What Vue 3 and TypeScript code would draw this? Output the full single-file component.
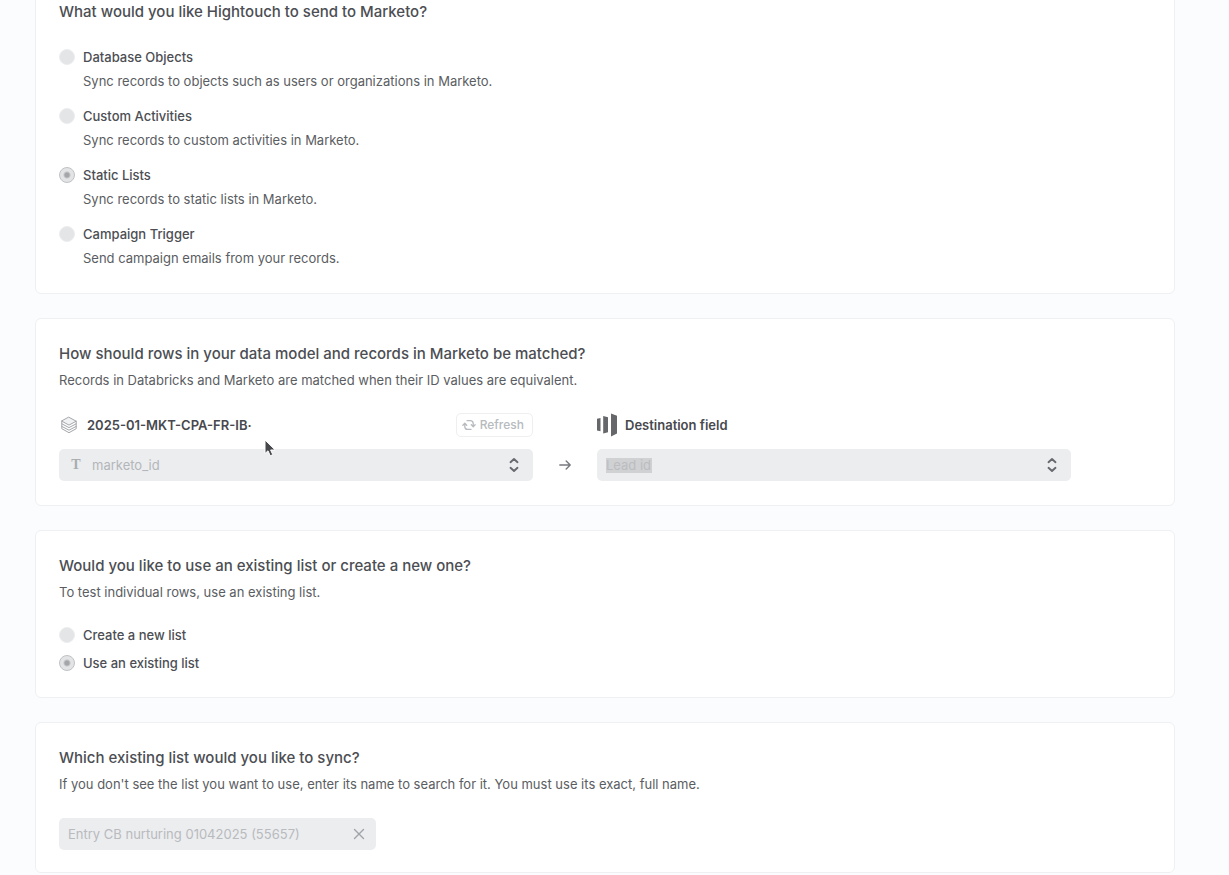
<script setup lang="ts">
import { ref } from 'vue'

interface SyncType {
  value: string
  label: string
  description: string
}

const syncTypes: SyncType[] = [
  { value: 'objects', label: 'Database Objects', description: 'Sync records to objects such as users or organizations in Marketo.' },
  { value: 'activities', label: 'Custom Activities', description: 'Sync records to custom activities in Marketo.' },
  { value: 'static', label: 'Static Lists', description: 'Sync records to static lists in Marketo.' },
  { value: 'campaign', label: 'Campaign Trigger', description: 'Send campaign emails from your records.' },
]

const listModes = [
  { value: 'new', label: 'Create a new list' },
  { value: 'existing', label: 'Use an existing list' },
]

const syncType = ref('static')
const listMode = ref('existing')
const listName = ref('Entry CB nurturing 01042025 (55657)')
</script>

<template>
  <main class="page">
    <section class="card">
      <h2 id="send-title">What would you like Hightouch to send to Marketo?</h2>
      <div class="types" role="radiogroup" aria-labelledby="send-title">
        <div v-for="t in syncTypes" :key="t.value" class="type">
          <label class="option">
            <input v-model="syncType" type="radio" name="sync-type" :value="t.value" disabled />
            <span>{{ t.label }}</span>
          </label>
          <p class="type-text">{{ t.description }}</p>
        </div>
      </div>
    </section>

    <section class="card">
      <h2>How should rows in your data model and records in Marketo be matched?</h2>
      <p class="hint">Records in Databricks and Marketo are matched when their ID values are equivalent.</p>
      <div class="mapping">
        <div class="side-head">
          <svg class="layers" viewBox="0 0 18 18" width="18" height="18" fill="none" stroke="#a3a6aa" stroke-width="1" stroke-linejoin="round" stroke-linecap="round">
            <path d="M9 1.3 16.2 5.2 9 9.1 1.8 5.2Z" fill="#f1f2f3" />
            <path d="M1.8 5.2v2.6L9 11.6l7.2-3.8V5.2" />
            <path d="M1.8 7.8v2.6L9 14.2l7.2-3.8V7.8" />
            <path d="M1.8 10.4v2.3L9 16.7l7.2-4v-2.3" />
          </svg>
          <label class="field-name" for="source-field">2025-01-MKT-CPA-FR-IB·</label>
          <button class="refresh" type="button" disabled>
            <svg viewBox="0 0 14 14" width="14" height="14" fill="none" stroke="currentColor" stroke-width="1.3" stroke-linecap="round" stroke-linejoin="round">
              <path d="M5 2.6h3.2a3 3 0 0 1 3 3v2.6M9.3 6.8l1.9 1.9 1.9-1.9" />
              <path d="M9 11.4H5.800a3 3 0 0 1-3-3V5.800M.9 7.200l1.900-1.900 1.900 1.900" />
            </svg>
            Refresh
          </button>
        </div>
        <span></span>
        <div class="side-head">
          <svg class="marketo" viewBox="0 0 20 24" width="20" height="24" fill="#65676b">
            <path d="M0 5.800 3.500 5V18.200L0 17.600Z" />
            <path d="M6.200 3 11 4.200V19.200L6.200 20.400Z" />
            <path d="M14 .600 20 2.800V20.600L14 23.400Z" />
          </svg>
          <label class="field-name" for="destination-field">Destination field</label>
        </div>
        <div class="select-wrap">
          <span class="type-icon" aria-hidden="true">T</span>
          <select id="source-field" class="source" disabled>
            <option>marketo_id</option>
          </select>
          <svg class="chevrons" viewBox="0 0 10 16" width="10" height="16" fill="none" stroke="#66696e" stroke-width="1.9" stroke-linecap="round" stroke-linejoin="round">
            <path d="M1.500 5.200 5 2 8.500 5.200M1.500 10.800 5 14 8.500 10.800" />
          </svg>
        </div>
        <svg class="arrow" viewBox="0 0 12 10" width="12" height="10" fill="none" stroke="#777a7f" stroke-width="1.4" stroke-linecap="round" stroke-linejoin="round">
          <path d="M.8 5h10.400M7.200 1l4 4-4 4" />
        </svg>
        <div class="select-wrap">
          <select id="destination-field" class="destination" disabled>
            <option>Lead id</option>
          </select>
          <svg class="chevrons" viewBox="0 0 10 16" width="10" height="16" fill="none" stroke="#66696e" stroke-width="1.9" stroke-linecap="round" stroke-linejoin="round">
            <path d="M1.500 5.200 5 2 8.500 5.200M1.500 10.800 5 14 8.500 10.800" />
          </svg>
        </div>
      </div>
      <svg class="pointer" viewBox="0 0 12 18" width="12" height="18">
        <path d="M1 1v13.500l3-2.700 2.200 5 2.600-1.100-2.200-4.700h4.600Z" fill="#47484b" stroke="#fff" stroke-width="1" />
      </svg>
    </section>

    <section class="card">
      <h2 id="mode-title">Would you like to use an existing list or create a new one?</h2>
      <p class="hint">To test individual rows, use an existing list.</p>
      <div class="modes" role="radiogroup" aria-labelledby="mode-title">
        <label v-for="m in listModes" :key="m.value" class="option">
          <input v-model="listMode" type="radio" name="list-mode" :value="m.value" disabled />
          <span>{{ m.label }}</span>
        </label>
      </div>
    </section>

    <section class="card">
      <h2><label for="list-name">Which existing list would you like to sync?</label></h2>
      <p class="hint">If you don't see the list you want to use, enter its name to search for it. You must use its exact, full name.</p>
      <div class="combo">
        <input id="list-name" v-model="listName" type="text" disabled />
        <button type="button" aria-label="Clear" disabled>
          <svg viewBox="0 0 12 12" width="12" height="12" fill="none" stroke="#a0a3a8" stroke-width="1.4" stroke-linecap="round">
            <path d="M1.500 1.500 10.500 10.500M10.500 1.500 1.500 10.500" />
          </svg>
        </button>
      </div>
    </section>
  </main>
</template>

<style>
body {
  margin: 0;
  background: #fbfcfe;
  overflow-x: hidden;
}
</style>

<style scoped>
.page {
  display: flex;
  flex-direction: column;
  gap: 24px;
  margin-top: -24px;
  padding: 0 54px 0 35px;
  font-family: Inter, "Liberation Sans", sans-serif;
  font-size: 13px;
  line-height: 20px;
  color: #5a5d62;
}

.card {
  position: relative;
  padding: 24px 23px;
  background: #fff;
  border: 1px solid #eef0f2;
  border-radius: 6px;
}

.card:last-child {
  padding-bottom: 22px;
}

h2 {
  margin: 0;
  font-size: 15px;
  font-weight: 500;
  line-height: 22px;
  color: #4c4e53;
}

p {
  margin: 0;
}

.hint {
  margin-top: 5px;
}

.types {
  display: flex;
  flex-direction: column;
  gap: 15px;
  margin-top: 24px;
  padding-bottom: 1px;
}

.type {
  display: flex;
  flex-direction: column;
  gap: 4px;
}

.type-text {
  padding-left: 24px;
}

.option {
  display: flex;
  align-items: center;
  gap: 8px;
  font-weight: 500;
  color: #4c4e53;
}

.option input {
  appearance: none;
  box-sizing: border-box;
  width: 16px;
  height: 16px;
  margin: 0;
  border-radius: 50%;
  border: 1px solid #ecedef;
  background: #e4e5e7;
}

.option input:checked {
  border-color: #bfc1c4;
  background: radial-gradient(circle, #a3a5a8 0 2px, #e3e4e6 4px);
}

.modes {
  display: flex;
  flex-direction: column;
  gap: 8px;
  margin-top: 23px;
}

.mapping {
  display: grid;
  grid-template-columns: 1fr 64px 1fr;
  row-gap: 12px;
  align-items: center;
  max-width: 1012px;
  margin-top: 23px;
}

.side-head {
  display: flex;
  align-items: center;
  height: 24px;
  color: #47494e;
}

.layers {
  margin: 0 9px 0 1px;
}

.marketo {
  margin-right: 8px;
}

.field-name {
  white-space: nowrap;
  font-weight: 600;
}

.refresh {
  display: flex;
  align-items: center;
  gap: 4px;
  box-sizing: border-box;
  height: 24px;
  margin-left: auto;
  padding: 0 8px 0 5px;
  border: 1px solid #eeeff1;
  border-radius: 5px;
  background: #fff;
  font: 500 12px/20px Inter, "Liberation Sans", sans-serif;
  color: #b7babe;
}

.select-wrap {
  display: grid;
  grid-template-columns: 1fr auto;
  align-items: center;
  height: 32px;
  border-radius: 5px;
  background: #ecedef;
}

.select-wrap > * {
  grid-row: 1;
}

.type-icon {
  grid-column: 1;
  justify-self: start;
  width: 16px;
  margin-left: 9px;
  text-align: center;
  font: 700 14px/20px "Liberation Serif", serif;
  color: #a9acb0;
}

select {
  grid-column: 1 / 3;
  appearance: none;
  width: 100%;
  height: 32px;
  margin: 0;
  padding: 0 32px 0 9px;
  border: 0;
  background: transparent;
  font: 400 13px/20px Inter, "Liberation Sans", sans-serif;
  color: #b3b6ba;
  opacity: 1;
}

.source {
  padding-left: 33px;
}

.destination {
  background: linear-gradient(#d0d1d3, #d0d1d3) 9px center / 46px 15px no-repeat;
  color: #bbbdc0;
}

.chevrons {
  grid-column: 2;
  margin-right: 14px;
}

.arrow {
  justify-self: center;
}

.pointer {
  position: absolute;
  left: 228px;
  top: 120px;
}

.combo {
  display: flex;
  align-items: center;
  width: 317px;
  height: 32px;
  margin-top: 24px;
  border-radius: 5px;
  background: #ecedef;
}

.combo input {
  flex: 1;
  min-width: 0;
  padding: 0 0 0 9px;
  border: 0;
  background: transparent;
  font: 400 13px/20px Inter, "Liberation Sans", sans-serif;
  color: #b8babe;
}

.combo button {
  display: flex;
  margin-right: 11px;
  padding: 0;
  border: 0;
  background: transparent;
}
</style>
